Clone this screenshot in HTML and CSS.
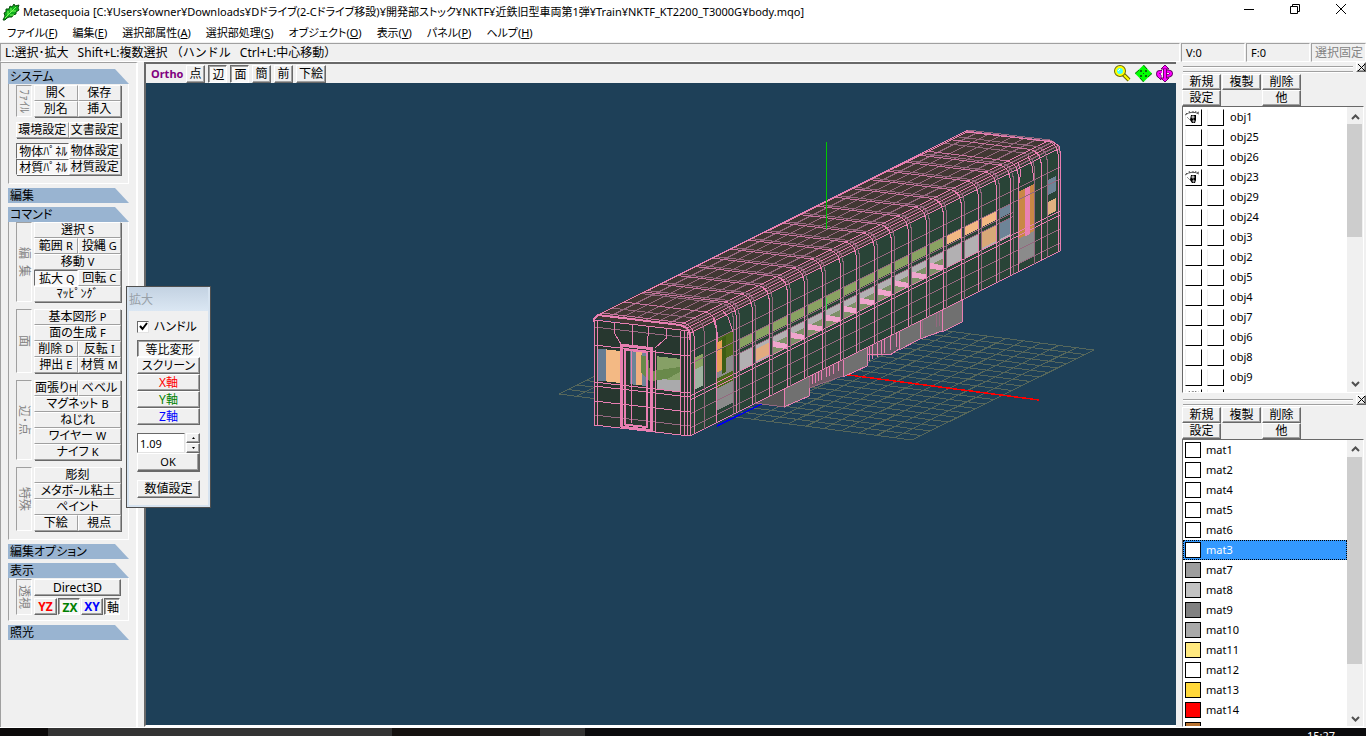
FILE: index.html
```html
<!DOCTYPE html>
<html lang="ja">
<head>
  <meta charset="UTF-8">
  <meta name="viewport" content="width=device-width, initial-scale=1.0">
  <title>Metasequoia</title>
  <link rel="stylesheet" href="styles.css">
</head>
<body>
  <header class="titlebar">
    <svg class="app-icon" width="18" height="18" viewBox="0 0 18 18">
      <path d="M1 17 3 13 2 10 4 9 4 6 7 6 8 3 10 4 12 1 13 3 17 2 16 5 17 7 14 9 14 11 11 12 10 14 7 14 5 15 3 17Z" fill="#0fae1c" stroke="#064f0b"/>
      <path d="M3 15 14 4M6 12V8M9 9V5M8 12h4M10 8h4" stroke="#7dff5a" fill="none"/>
    </svg>
    <h1>Metasequoia [C:¥Users¥owner¥Downloads¥Dドライブ(2-Cドライブ移設)¥開発部ストック¥NKTF¥近鉄旧型車両第1弾¥Train¥NKTF_KT2200_T3000G¥body.mqo]</h1>
    <div class="window-buttons">
      <button type="button" aria-label="最小化"><svg width="12" height="12"><path d="M1 6.500h10"/></svg></button>
      <button type="button" aria-label="元に戻す"><svg width="12" height="12"><path d="M1.500 3.500h7v7h-7zM3.500 3.500v-2h7v7h-2"/></svg></button>
      <button type="button" aria-label="閉じる"><svg width="12" height="12"><path d="M1 1l10 10M11 1 1 11"/></svg></button>
    </div>
  </header>

  <nav class="menubar">
    <a href="#">ファイル(<u>F</u>)</a>
    <a href="#">編集(<u>E</u>)</a>
    <a href="#">選択部属性(<u>A</u>)</a>
    <a href="#">選択部処理(<u>S</u>)</a>
    <a href="#">オブジェクト(<u>O</u>)</a>
    <a href="#">表示(<u>V</u>)</a>
    <a href="#">パネル(<u>P</u>)</a>
    <a href="#">ヘルプ(<u>H</u>)</a>
  </nav>

  <div class="statusbar">
    <p class="hint">L:選択･拡大&ensp; Shift+L:複数選択 （ハンドル&ensp; Ctrl+L:中心移動）</p>
    <span class="count">V:0</span>
    <span class="count">F:0</span>
    <span class="lock">選択固定</span>
  </div>

  <main class="workspace">
    <aside class="commands">
      <section>
        <h2>システム</h2>
        <div class="box system">
          <div class="group">
            <span class="side">ﾌｧｲﾙ</span>
            <div class="keys">
              <button type="button">開く</button><button type="button">保存</button>
              <button type="button">別名</button><button type="button">挿入</button>
            </div>
          </div>
          <div class="keys full">
            <button type="button">環境設定</button><button type="button">文書設定</button>
          </div>
          <div class="keys full">
            <button type="button" class="on">物体ﾊﾟﾈﾙ</button><button type="button">物体設定</button>
            <button type="button" class="on">材質ﾊﾟﾈﾙ</button><button type="button">材質設定</button>
          </div>
        </div>
      </section>

      <section>
        <h2>編集</h2>
      </section>

      <section>
        <h2>コマンド</h2>
        <div class="box command">
          <div class="group">
            <span class="side">編&ensp;集</span>
            <div class="keys">
              <button type="button" class="wide">選択 <kbd>S</kbd></button>
              <button type="button">範囲 <kbd>R</kbd></button><button type="button">投縄 <kbd>G</kbd></button>
              <button type="button" class="wide">移動 <kbd>V</kbd></button>
              <button type="button" class="on">拡大 <kbd>Q</kbd></button><button type="button">回転 <kbd>C</kbd></button>
              <button type="button" class="wide">ﾏｯﾋﾟﾝｸﾞ</button>
            </div>
          </div>
          <div class="group">
            <span class="side">面</span>
            <div class="keys">
              <button type="button" class="wide">基本図形 <kbd>P</kbd></button>
              <button type="button" class="wide">面の生成 <kbd>F</kbd></button>
              <button type="button">削除 <kbd>D</kbd></button><button type="button">反転 <kbd>I</kbd></button>
              <button type="button">押出 <kbd>E</kbd></button><button type="button">材質 <kbd>M</kbd></button>
            </div>
          </div>
          <div class="group">
            <span class="side">辺･点</span>
            <div class="keys">
              <button type="button">面張り<kbd>H</kbd></button><button type="button">ベベル</button>
              <button type="button" class="wide">マグネット <kbd>B</kbd></button>
              <button type="button" class="wide">ねじれ</button>
              <button type="button" class="wide">ワイヤー <kbd>W</kbd></button>
              <button type="button" class="wide">ナイフ <kbd>K</kbd></button>
            </div>
          </div>
          <div class="group">
            <span class="side">特殊</span>
            <div class="keys">
              <button type="button" class="wide">彫刻</button>
              <button type="button" class="wide">メタボｰル粘土</button>
              <button type="button" class="wide">ペイント</button>
              <button type="button">下絵</button><button type="button">視点</button>
            </div>
          </div>
        </div>
      </section>

      <section>
        <h2>編集オプション</h2>
      </section>

      <section>
        <h2>表示</h2>
        <div class="box display">
          <div class="group">
            <span class="side">透視</span>
            <div class="view-keys">
              <button type="button" class="renderer">Direct3D</button>
              <div class="planes">
                <button type="button" class="red">YZ</button>
                <button type="button" class="green on">ZX</button>
                <button type="button" class="blue">XY</button>
                <button type="button" class="axis on">軸</button>
              </div>
            </div>
          </div>
        </div>
      </section>

      <section>
        <h2>照光</h2>
      </section>
    </aside>

    <section class="viewport">
      <div class="view-toolbar">
        <strong>Ortho</strong>
        <div class="toggles">
          <button type="button">点</button>
          <button type="button" class="on">辺</button>
          <button type="button" class="on">面</button>
          <button type="button">簡</button>
          <button type="button">前</button>
          <button type="button" class="underlay">下絵</button>
        </div>
        <div class="nav-icons">
          <button type="button" aria-label="ズーム">
            <svg width="17" height="17" viewBox="0 0 17 17"><path d="M9 9l6 6" stroke="#6b6b00" stroke-width="4"/><path d="M9 9l6 6" stroke="#ff0" stroke-width="2"/><circle cx="6" cy="6" r="5" fill="#0ff" stroke="#6b6b00" stroke-width="2"/><circle cx="6" cy="6" r="4" fill="#4ff" stroke="#ff0" stroke-width="2"/><path d="M4 6l2-2" stroke="#fff"/></svg>
          </button>
          <button type="button" aria-label="移動">
            <svg width="17" height="17" viewBox="0 0 17 17"><path d="M8.500 0 17 8.500 8.500 17 0 8.500Z" fill="#0f0"/><path d="M8.500 0 12 4M17 8.500 13 12M8.500 17 5 13M0 8.500 4 5" stroke="#076b07"/><path d="M5 5h2v2H5zM10 5h2v2h-2zM5 10h2v2H5zM10 10h2v2h-2z" fill="#076b07"/><path d="M8 8h1v1H8z" fill="#076b07"/></svg>
          </button>
          <button type="button" aria-label="回転">
            <svg width="17" height="17" viewBox="0 0 17 17"><path d="M9 14V4M6 7H4Q2 7 2 9t3 2.500M11 6.500q4 0 4 2T11 11" fill="none" stroke="#6b006b" stroke-width="4"/><path d="M9 0 13 4H5zM9 17 5 13h8zM5 7v8L1 11z" fill="#f0f" stroke="#6b006b"/><path d="M9 14V4M6 7H4Q2 7 2 9t3 2.500M11 6.500q4 0 4 2T11 11" fill="none" stroke="#f0f" stroke-width="2"/><path d="M5 8h2v2H5zM11 8h2v1h-2z" fill="#f0f0f0"/></svg>
          </button>
        </div>
      </div>
      <svg id="scene" viewBox="146 83 1030 642" preserveAspectRatio="xMidYMid slice" role="img" aria-label="body.mqo"></svg>
    </section>

    <aside class="panels">
      <section class="panel objects">
        <div class="grip"><i></i><button type="button" aria-label="閉じる"><svg width="7" height="7"><path d="M0 0l7 7M7 0 0 7"/></svg></button></div>
        <div class="panel-keys">
          <button type="button">新規</button><button type="button">複製</button><button type="button">削除</button>
          <button type="button">設定</button><span></span><button type="button">他</button>
        </div>
        <div class="list">
          <ul id="object-list"></ul>
          <div class="scroll">
            <button type="button" aria-label="上へ"><svg width="9" height="6"><path d="M1 5l3.500-3.500L8 5"/></svg></button>
            <div class="track"><div class="thumb"></div></div>
            <button type="button" aria-label="下へ"><svg width="9" height="6"><path d="M1 1l3.500 3.500L8 1"/></svg></button>
          </div>
        </div>
      </section>

      <section class="panel materials">
        <div class="grip"><i></i><button type="button" aria-label="閉じる"><svg width="7" height="7"><path d="M0 0l7 7M7 0 0 7"/></svg></button></div>
        <div class="panel-keys">
          <button type="button">新規</button><button type="button">複製</button><button type="button">削除</button>
          <button type="button">設定</button><span></span><button type="button">他</button>
        </div>
        <div class="list">
          <ul id="material-list"></ul>
          <div class="scroll">
            <button type="button" aria-label="上へ"><svg width="9" height="6"><path d="M1 5l3.500-3.500L8 5"/></svg></button>
            <div class="track"><div class="thumb"></div></div>
            <button type="button" aria-label="下へ"><svg width="9" height="6"><path d="M1 1l3.500 3.500L8 1"/></svg></button>
          </div>
        </div>
      </section>
    </aside>
  </main>

  <footer class="taskbar"><time>15:27</time></footer>

  <form class="dialog">
    <h2>拡大</h2>
    <div class="dialog-body">
      <label class="handle"><input type="checkbox" checked><svg width="9" height="9"><path d="M1 4l2.500 3L8 1"/></svg>ハンドル</label>
      <div class="stack">
        <button type="button" class="on">等比変形</button>
        <button type="button">スクリーン</button>
        <button type="button" class="red">X軸</button>
        <button type="button" class="green">Y軸</button>
        <button type="button" class="blue">Z軸</button>
      </div>
      <div class="amount">
        <input type="text" value="1.09" aria-label="倍率">
        <div class="spin">
          <button type="button" aria-label="増やす"><svg width="3" height="2"><path d="M0 2h3L1.500 0z"/></svg></button>
          <button type="button" aria-label="減らす"><svg width="3" height="2"><path d="M0 0h3L1.500 2z"/></svg></button>
        </div>
      </div>
      <button type="button" class="ok">OK</button>
      <button type="button" class="numeric">数値設定</button>
    </div>
  </form>

  <script src="script.js"></script>
</body>
</html>
```
FILE: styles.css
```css
* {
  box-sizing: border-box;
}
body {
  margin: 0;
  height: 100vh;
  display: flex;
  flex-direction: column;
  overflow: hidden;
  background: #f0f0f0;
  color: #000;
  font-family: "Noto Sans", "Noto Sans CJK JP", sans-serif;
  font-size: 12px;
  line-height: 16px;
  font-feature-settings: "palt";
}
h1, h2, p, ul {
  margin: 0;
  padding: 0;
  font-size: 12px;
  font-weight: normal;
}
button, input {
  font: inherit;
  font-feature-settings: inherit;
  color: inherit;
}
button {
  padding: 0;
  border: 1px solid;
  border-color: #fff #696969 #696969 #fff;
  box-shadow: inset -1px -1px #a0a0a0;
  background: #f0f0f0;
  line-height: 12px;
  white-space: nowrap;
}
button.on {
  border-color: #696969 #fff #fff #696969;
  box-shadow: inset 1px 1px #a0a0a0;
  background: #f8f8f8;
  padding: 2px 0 0 2px;
}
kbd {
  font: inherit;
  font-size: 11px;
}
.red { color: #f00; }
.green { color: #008000; }
.blue { color: #00f; }

/* title and menu */
.titlebar {
  display: flex;
  align-items: center;
  height: 24px;
  padding-right: 2px;
  background: #fff;
}
.app-icon {
  margin: 0 3px 0 2px;
}
.titlebar h1 {
  flex: 1;
  font-size: 11px;
  white-space: nowrap;
}
.window-buttons {
  display: flex;
  padding-bottom: 4px;
}
.window-buttons button {
  width: 46px;
  height: 20px;
  border: 0;
  box-shadow: none;
  background: none;
}
.window-buttons svg {
  fill: none;
  stroke: #000;
}
.menubar {
  display: flex;
  gap: 15px;
  height: 18px;
  padding-left: 7px;
  background: #fff;
  font-size: 11px;
}
.menubar a {
  color: #000;
  text-decoration: none;
  line-height: 18px;
  white-space: nowrap;
}
.statusbar {
  display: flex;
  gap: 1px;
  height: 20px;
  padding-top: 1px;
}
.statusbar > * {
  border: 1px solid;
  border-color: #a0a0a0 #fff #fff #a0a0a0;
  line-height: 17px;
  padding-left: 4px;
}
.hint {
  flex: 1;
  font-feature-settings: normal;
}
.count {
  width: 64px;
  font-size: 11px;
}
.statusbar .lock {
  width: 55px;
  padding-left: 3px;
  color: #838383;
}

.workspace {
  flex: 1;
  min-height: 0;
  display: flex;
}

/* left command panel */
.commands {
  width: 138px;
  margin-right: 6px;
  padding: 6px 7px 0;
  border: 1px solid #a0a0a0;
  border-width: 1px 0 0 1px;
  border-right: 2px solid #fff;
  display: flex;
  flex-direction: column;
  gap: 4px;
}
.commands section {
  width: 121px;
}
.commands h2 {
  height: 15px;
  padding-left: 2px;
  background: #99b4d1;
  line-height: 15px;
  clip-path: polygon(0 0, 107px 0, 100% 100%, 0 100%);
}
.box {
  border: 1px solid;
  border-color: #fff #fff #fff #a0a0a0;
  border-top: 0;
  padding: 0 7px;
  display: flex;
  flex-direction: column;
}
.system {
  gap: 5px;
  padding-top: 1px;
  padding-bottom: 8px;
}
.command {
  gap: 7px;
  padding-bottom: 8px;
}
.display {
  padding-top: 1px;
  padding-bottom: 5px;
}
.group {
  display: flex;
  gap: 2px;
}
.side {
  width: 16px;
  border: 1px solid;
  border-color: #a0a0a0 #fff #fff #a0a0a0;
  color: #838383;
  writing-mode: vertical-rl;
  text-orientation: sideways;
  text-align: center;
  line-height: 14px;
}
.keys {
  flex: 1;
  display: grid;
  grid-template-columns: 1fr 1fr;
  grid-auto-rows: 16px;
  box-shadow: 1px 1px #696969;
}
.keys button {
  border-color: #fff #a0a0a0 #a0a0a0 #fff;
  box-shadow: none;
}
.keys button.on {
  border-color: #696969 #fff #fff #696969;
}
.keys .wide {
  grid-column: span 2;
}
.view-keys {
  flex: 1;
  display: flex;
  flex-direction: column;
  gap: 2px;
}
.renderer {
  height: 17px;
}
.planes {
  display: grid;
  grid-template-columns: 23px 22px 22px 16px;
  gap: 1px;
  height: 17px;
}
.planes button {
  font-weight: bold;
}
.planes .axis {
  font-weight: normal;
}

/* 3D view */
.viewport {
  flex: 1;
  min-width: 0;
  display: flex;
  flex-direction: column;
  border: 2px solid;
  border-color: #696969 #fff #fff #696969;
  border-right-width: 0;
}
.view-toolbar {
  display: flex;
  align-items: center;
  height: 19px;
  padding-left: 5px;
}
.view-toolbar strong {
  width: 35px;
  font-size: 11px;
  color: #800080;
}
.toggles {
  display: flex;
  gap: 3px;
}
.toggles button {
  width: 19px;
  height: 18px;
}
.toggles .underlay {
  width: 30px;
}
.nav-icons {
  display: flex;
  gap: 4px;
  margin-left: auto;
  padding-right: 3px;
}
.nav-icons button {
  width: 17px;
  height: 17px;
  border: 0;
  box-shadow: none;
}
#scene {
  flex: 1;
  min-height: 0;
  width: 100%;
  background: #1e4058;
}

/* right panels */
.panels {
  flex: 0 0 184px;
  margin-left: 6px;
  display: flex;
  flex-direction: column;
}
.panel {
  flex: 1 1 0;
  min-height: 0;
  display: flex;
  flex-direction: column;
}
.grip {
  display: flex;
  gap: 3px;
  height: 12px;
}
.grip i {
  flex: 1;
  height: 6px;
  margin: 4px 0 0 1px;
  border: 1px solid #a0a0a0;
  border-width: 1px 0;
  box-shadow: inset 0 1px #fff, 0 1px #fff;
}
.grip button {
  width: 10px;
  height: 10px;
  display: grid;
  place-items: center;
}
.grip svg {
  stroke: #000;
}
.panel-keys {
  display: grid;
  grid-template-columns: repeat(3, 39px);
  grid-auto-rows: 16px;
  column-gap: 1px;
}
.panel-keys button {
  line-height: 14px;
}
.list {
  flex: 1;
  min-height: 0;
  margin-right: 2px;
  display: flex;
  border: 1px solid;
  border-color: #696969 #fff #fff #696969;
  background: #fff;
}
.objects .list {
  margin-bottom: 2px;
}
.list ul {
  flex: 1;
  overflow: hidden;
  list-style: none;
  font-size: 11px;
}
.list li {
  display: flex;
  align-items: center;
  height: 20px;
}
.objects li {
  gap: 5px;
}
.cell {
  position: relative;
  width: 17px;
  height: 17px;
}
.objects li .cell:first-child {
  margin-left: 2px;
}
.cell input {
  appearance: none;
  display: block;
  margin: 0;
  width: 17px;
  height: 17px;
  border: 1px solid;
  border-color: #fff #000 #000 #f0f0f0;
  background: #fff;
}
.cell svg {
  position: absolute;
  left: 0;
  top: 1px;
}
.name {
  flex: 1;
  padding-left: 1px;
}
.materials li {
  padding-left: 2px;
}
.materials .name {
  padding-left: 5px;
}
.swatch {
  width: 16px;
  height: 16px;
  border: 1px solid #000;
}
.selected {
  background: #3399ff;
  color: #fff;
  outline: 1px dotted #000;
  outline-offset: -1px;
}
.scroll {
  width: 16px;
  display: flex;
  flex-direction: column;
  background: #f0f0f0;
}
.scroll button {
  height: 17px;
  border: 0;
  box-shadow: none;
}
.scroll svg {
  fill: none;
  stroke: #505050;
  stroke-width: 2;
}
.track {
  flex: 1;
}
.thumb {
  width: 15px;
  height: 45%;
  background: #cdcdcd;
}
.materials .thumb {
  height: 82%;
}

.taskbar {
  height: 9px;
  border-top: 1px solid #fff;
  overflow: hidden;
  background: linear-gradient(90deg, #0c0a0a 48px, #333 48px, #333 392px, #15110f 392px, #15110f 540px, #333 540px, #333 585px, #0b0b0d 585px);
}
.taskbar time {
  display: block;
  padding-right: 31px;
  color: #fff;
  font-size: 11px;
  text-align: right;
}

/* floating scale dialog */
.dialog {
  position: absolute;
  left: 126px;
  top: 286px;
  width: 85px;
  padding: 0 2px 2px;
  border: 1px solid #505050;
  background: #d6e3f0;
}
.dialog h2 {
  height: 24px;
  color: #98a0a8;
  line-height: 26px;
  background: linear-gradient(#c3d2e2, #dbe7f3);
}
.dialog-body {
  padding: 8px 8px 7px;
  display: flex;
  flex-direction: column;
  background: #f0f0f0;
}
.handle {
  position: relative;
  display: flex;
  align-items: center;
  gap: 5px;
  margin-bottom: 5px;
}
.handle input {
  appearance: none;
  margin: 0;
  width: 12px;
  height: 12px;
  border: 1px solid;
  border-color: #696969 #e3e3e3 #e3e3e3 #696969;
  background: #fff;
}
.handle svg {
  position: absolute;
  left: 2px;
  top: 3px;
  fill: none;
  stroke: #000;
  stroke-width: 2;
}
.stack {
  display: grid;
  grid-auto-rows: 17px;
}
.amount {
  display: flex;
  gap: 1px;
  margin-top: 8px;
}
.amount input {
  flex: 1;
  min-width: 0;
  height: 20px;
  padding: 0 2px;
  border: 1px solid;
  border-color: #696969 #e3e3e3 #e3e3e3 #696969;
  background: #fff;
  font-size: 11px;
}
.spin {
  display: grid;
  width: 14px;
}
.spin button {
  display: grid;
  place-items: center;
}
.ok, .numeric {
  height: 19px;
  font-size: 11px;
}
.ok {
  border-width: 1px 2px 2px 1px;
}
.dialog .numeric {
  height: 18px;
  margin-top: 8px;
  font-size: 12px;
}
```
FILE: script.js
```js
// side lists, the last row of each is still unnamed
const objects = ['obj1', 'obj25', 'obj26', 'obj23', 'obj29', 'obj24', 'obj3', 'obj2', 'obj5', 'obj4', 'obj7', 'obj6', 'obj8', 'obj9', ''];
const visible = ['obj1', 'obj23', ''];
const materials = [
  ['mat1', '#fff'], ['mat2', '#fff'], ['mat4', '#fff'], ['mat5', '#fff'], ['mat6', '#fff'], ['mat3', '#fff'],
  ['mat7', '#9d9d9d'], ['mat8', '#c3c3c3'], ['mat9', '#808080'], ['mat10', '#a9a9a9'], ['mat11', '#ffe97f'],
  ['mat12', '#fff'], ['mat13', '#ffd83a'], ['mat14', '#f00'], ['', '#b97230']
];
const eye = '<svg width="15" height="14"><path d="M0 5Q7 0 14 4M1 3l1 1M4 1l1 2M8 1v2M11 1l-1 2M14 2l-2 1" fill="none" stroke="#555"/><path d="M6 5h5v5l-1 3H7L5 10z" fill="#000"/><path d="M7 6h2v2H7zM8 10h1v2H8zM2 7l3 3" fill="#fff" stroke="#999"/></svg>';

document.getElementById('object-list').innerHTML = objects.map(name => {
  const on = visible.includes(name);
  return `<li><span class="cell"><input type="checkbox" aria-label="${name} 表示"${on ? ' checked' : ''}>${on ? eye : ''}</span>` +
    `<span class="cell"><input type="checkbox" aria-label="${name} ロック"></span><span class="name">${name}</span></li>`;
}).join('');

document.getElementById('material-list').innerHTML = materials.map(([name, color]) =>
  `<li${name === 'mat3' ? ' class="selected"' : ''}><span class="swatch" style="background:${color}"></span><span class="name">${name}</span></li>`
).join('');

// scene: orthographic train body over the ground grid
const PINK = '#e87fb2';
const DIM = '#94687f';
const out = [];
const poly = (pts, fill, stroke) => out.push(`<polygon points="${pts.map(p => p.join()).join(' ')}" fill="${fill}"${stroke ? ` stroke="${stroke}"` : ''}/>`);
const line = (pts, stroke, w) => out.push(`<polyline points="${pts.map(p => p.join()).join(' ')}" fill="none" stroke="${stroke}" stroke-width="${w || 1}"/>`);

// x on screen, v = height above the lower edge of the side
const side = (x, v) => [x, 436 - (x - 690) / 2 - v];
const front = (x, v) => [x, 425 + (x - 594) * 0.115 - v];
const roof = (u, w) => [598 + u + 82 * w, 315 - u / 2 + 10 * w];
const quad = (x1, x2, v1, v2, fill) => poly([side(x1, v1), side(x2, v1), side(x2, v2), side(x1, v2)], fill);

// ground grid
for (let i = 0; i <= 20; i++) {
  const t = i / 20;
  line([[559 + 182 * t, 394 - 90 * t], [912 + 182 * t, 440 - 90 * t]], '#56675b');
  line([[559 + 353 * t, 394 + 46 * t], [741 + 353 * t, 304 + 46 * t]], '#56675b');
}
line([[826, 372], [1039, 400]], '#f00', 1.5);
line([[826, 372], [717, 426]], '#0000e8', 1.5);

// underfloor equipment
poly([[754, 403], [784, 386], [784, 407]], '#555', DIM);
poly([[784, 386], [809, 374], [809, 396], [784, 407]], '#707070', PINK);
poly([[809, 370], [843, 354], [843, 376], [809, 388]], '#6b5a64', DIM);
poly([[843, 354], [867, 342], [867, 366], [843, 377]], '#707070', PINK);
poly([[867, 340], [899, 326], [899, 349], [890, 355], [867, 354]], '#5e5a60', PINK);
poly([[899, 326], [920, 316], [920, 339], [899, 350]], '#707070', PINK);
poly([[920, 316], [942, 306], [942, 331], [920, 339]], '#707070', PINK);
poly([[942, 306], [962, 296], [962, 322], [942, 332]], '#707070', PINK);
for (const x of [812, 815, 818, 821, 826, 829, 833, 838]) {
  line([side(x, 2), side(x, -9)], PINK);
}
for (const x of [869, 872, 877, 881, 884, 890, 896, 922, 936, 939]) {
  line([side(x, 2), side(x, -14)], x > 920 ? DIM : PINK);
}

// body shells
poly([[594, 318], [598, 314], [967, 131], [1053, 142], [1060, 148], [690, 334]], '#413833');
poly([side(690, 102), side(1054, 105), side(1060, 101), side(1060, 0), side(690, 0)], '#294437');
poly([front(594, 106), front(690, 104), front(690, 0), front(594, 0)], '#27372f');

// side windows
const bays = [739, 755, 772, 790, 807, 825, 843, 859, 877, 894, 911, 929, 946, 964, 981, 999, 1013];
bays.slice(0, -1).forEach((x, i) => {
  const end = bays[i + 1] - 3;
  quad(x, end, 63, 72, i < 12 ? '#89a262' : i < 15 ? '#f2b883' : '#6d8497');
  quad(x, end, 40, 58, '#b2b0b2');
  if (i === 1) {
    quad(x, end, 42, 54, '#e2ab80');
  } else if (i > 1 && i < 12) {
    quad(x, end, 40, 51, '#7d9068');
    poly([side(x, 54), [end, side(x, 51)[1]], [end, side(x, 46)[1]], side(x, 48)], '#efa5cc');
  } else if (i > 13) {
    quad(x, end, 42, 58, i === 14 ? '#d8a878' : '#6d8497');
  }
});
quad(695, 703, 44, 76, '#9fb3a0');
quad(695, 703, 64, 76, '#89a262');
quad(1047, 1056, 62, 77, '#6d8497');
quad(1047, 1056, 42, 55, '#e0b080');

// doors
quad(716, 733, 12, 82, '#8b8b8b');
quad(716, 733, 60, 84, '#4c6a1c');
quad(716, 722, 50, 80, '#e8a055');
quad(722, 726, 46, 82, '#3c5d14');
quad(716, 733, 34, 44, '#4c6a1c');
quad(1018, 1034, 8, 80, '#8b8b8b');
quad(1018, 1034, 33, 80, '#c98845');
quad(1025, 1030, 32, 80, '#ea82b5');

// long lines of the side
for (const v of [0, 8, 22, 36, 40]) line([side(690, v), side(1060, v)], v === 8 || v === 22 ? DIM : PINK);
for (const v of [72, 84]) line([side(690, v), side(1060, v)], DIM);
line([side(733, 58), side(1013, 58)], DIM);
line([side(733, 62), side(1013, 62)], DIM);

// roof mesh
for (let i = 0; i <= 7; i++) line([roof(0, i / 7), roof(370, i / 7)], i ? DIM : PINK);
for (let i = 0; i < 5; i++) line([[680 + i * 2.5, 325 + i * 2], [1050 + i * 2.5, 140 + i * 2]], i % 2 ? DIM : PINK);

// ribs run over the roof, round the corner and down the side
const ribs = [690, 694, 704, 716, 733, 1018, 1034, 1041, 1047, 1058, 1060];
bays.forEach(x => ribs.push(x - 3, x));
ribs.forEach((x, i) => {
  const u = x - 690;
  const color = i % 2 ? PINK : DIM;
  line([roof(u, 0), roof(u, 1)], i % 2 ? '#c8749f' : DIM);
  line([roof(u, 1), [x - 6, 327 - u / 2], [x - 2, 331 - u / 2], side(x, 98), side(x, 0)], color);
});
line([[716, 350], [718, 335], [713, 318]], PINK);
line([[733, 332], [728, 317], [722, 310]], PINK);
line([[1018, 188], [1021, 172], [1018, 163]], PINK);
line([[1034, 180], [1032, 166], [1028, 156]], PINK);

// cab front
poly([front(598, 45), front(621, 45), front(621, 77), front(598, 77)], '#f3b984');
poly([front(598, 45), front(606, 45), front(606, 77), front(598, 77)], '#647c93');
poly([front(630, 45), front(646, 45), front(646, 80), front(630, 80)], '#6d8497');
poly([front(636, 45), front(642, 45), front(642, 78), front(636, 78)], '#f0b080');
poly([front(657, 43), front(680, 43), front(680, 76), front(657, 76)], '#aaaaac');
poly([front(657, 53), front(680, 55), front(680, 76), front(657, 76)], '#86a066');
poly([front(641, 58), front(650, 50), front(668, 55), front(680, 63), front(680, 68), front(650, 60), front(648, 75), front(641, 75)], '#69894a');
for (const v of [0, 10, 24, 39, 43, 80, 98, 105]) line([front(594, v), front(690, v)], v === 10 || v === 98 ? DIM : PINK);
for (const x of [594, 597, 680, 684, 687, 690]) line([front(x, 104), front(x, 0)], PINK);
line([front(621, 1), front(621, 83), front(651, 83), front(651, 1), front(621, 1)], PINK, 3);
line([front(625, 4), front(625, 79), front(647, 79), front(647, 4), front(625, 4)], PINK, 2);
line([front(631, 6), front(631, 79)], PINK);
line([front(655, 0), front(655, 82)], PINK);
for (const [a, b] of [[614, 621], [632, 632], [648, 647], [666, 655]]) line([front(a, 105), front(a, 95), front(b, 84)], PINK);
line([[594, 322], [594, 319], [598, 315], [680, 325], [687, 328], [690, 334], [690, 340]], PINK, 2);
line([[598, 315], [967, 132], [1053, 142], [1059, 146], [1060, 151], [1060, 251]], PINK);
line([[826.5, 142], [826.5, 229]], '#00c800');
line([side(826, 58), side(826, 70)], '#3fdc50');

document.getElementById('scene').innerHTML = `<g shape-rendering="crispEdges">${out.join('')}</g>`;
```
